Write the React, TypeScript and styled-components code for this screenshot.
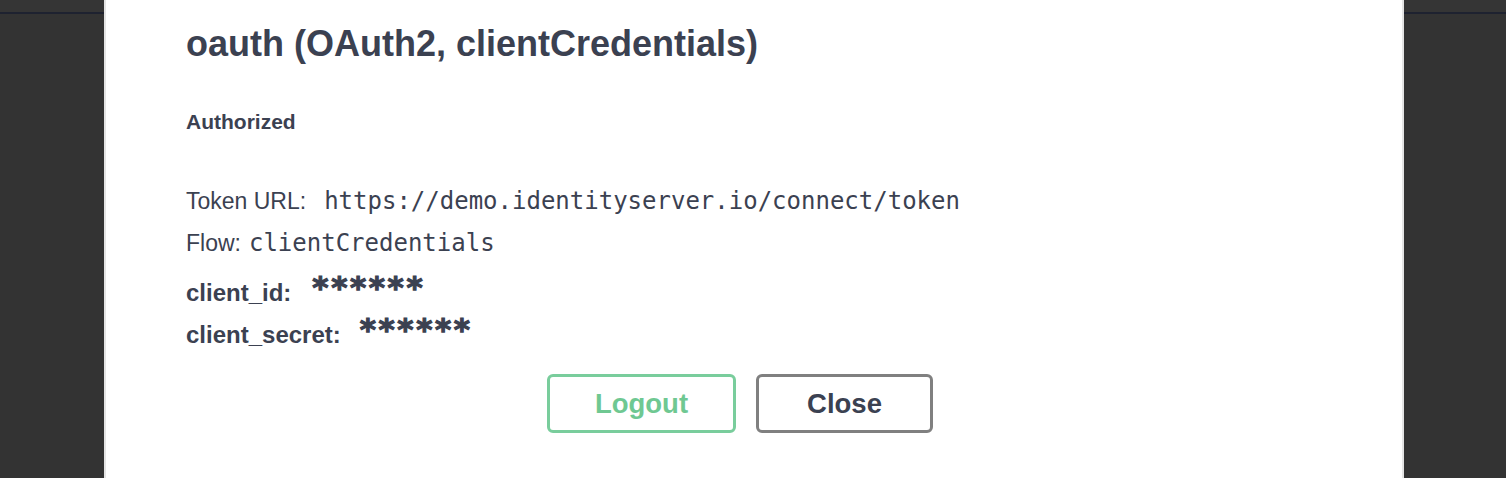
import React from "react";
import styled, { createGlobalStyle } from "styled-components";

const GlobalStyle = createGlobalStyle`
  html, body {
    margin: 0;
    padding: 0;
    height: 100%;
    overflow: hidden;
  }
  body {
    background: linear-gradient(
      #353535 0 12px,
      #1e2230 12px 14px,
      #333333 14px
    );
    font-family: "Liberation Sans", Arial, sans-serif;
    color: #3b4151;
  }
`;

const Backdrop = styled.div`
  height: 478px;
  display: flex;
  padding-left: 104px;
`;

const Modal = styled.div`
  width: 1300px;
  height: 100%;
  background: #ffffff;
  border-left: 2px solid #e4e4e4;
  border-right: 2px solid #e4e4e4;
  padding: 0 108px 0 80px;
  box-sizing: border-box;
  display: flex;
  flex-direction: column;
`;

const Title = styled.h2`
  margin: 22px 0 0;
  font-size: 36px;
  line-height: 43px;
  font-weight: 700;
  color: #3b4151;
`;

const Status = styled.h4`
  margin: 44px 0 0;
  font-size: 21px;
  line-height: 25px;
  font-weight: 700;
`;

const Row = styled.div<{ $top: number }>`
  display: flex;
  align-items: center;
  margin-top: ${(p) => p.$top}px;
  height: 28px;
`;

const Label = styled.span<{ $bold?: boolean }>`
  font-size: ${(p) => (p.$bold ? "24px" : "23px")};
  font-weight: ${(p) => (p.$bold ? 700 : 400)};
  line-height: 28px;
`;

const Code = styled.code<{ $gap: number }>`
  font-family: "DejaVu Sans Mono", Menlo, monospace;
  font-size: 24px;
  line-height: 28px;
  margin-left: ${(p) => p.$gap}px;
  color: #3b4151;
`;

const Secret = styled.span<{ $gap: number }>`
  margin-left: ${(p) => p.$gap}px;
  font-family: "DejaVu Sans", sans-serif;
  font-weight: 700;
  font-size: 31px;
  letter-spacing: 2.6px;
  -webkit-text-stroke: 1.2px #3b4151;
  position: relative;
  top: -6px;
`;

const Actions = styled.div`
  display: flex;
  justify-content: center;
  gap: 20px;
  margin-top: 25px;
`;

const Button = styled.button<{ $tone: "green" | "gray"; $width: number }>`
  width: ${(p) => p.$width}px;
  height: 59px;
  background: #ffffff;
  border: 3px solid ${(p) => (p.$tone === "green" ? "#79cd9c" : "#808080")};
  border-radius: 6px;
  font-family: "Liberation Sans", Arial, sans-serif;
  font-size: 27.5px;
  font-weight: 700;
  color: ${(p) => (p.$tone === "green" ? "#6fc892" : "#3b4151")};
  cursor: pointer;
  padding: 0;
`;

const App: React.FC = () => {
  return (
    <>
      <GlobalStyle />
      <Backdrop>
        <Modal>
          <Title>oauth (OAuth2, clientCredentials)</Title>
          <Status>Authorized</Status>
          <Row $top={53}>
            <Label>Token URL:</Label>
            <Code $gap={18}>https://demo.identityserver.io/connect/token</Code>
          </Row>
          <Row $top={14}>
            <Label>Flow:</Label>
            <Code $gap={8}>clientCredentials</Code>
          </Row>
          <Row $top={22}>
            <Label $bold>client_id:</Label>
            <Secret $gap={21}>******</Secret>
          </Row>
          <Row $top={14}>
            <Label $bold>client_secret:</Label>
            <Secret $gap={19}>******</Secret>
          </Row>
          <Actions>
            <Button $tone="green" $width={189}>
              Logout
            </Button>
            <Button $tone="gray" $width={177}>
              Close
            </Button>
          </Actions>
        </Modal>
      </Backdrop>
    </>
  );
};

export default App;
